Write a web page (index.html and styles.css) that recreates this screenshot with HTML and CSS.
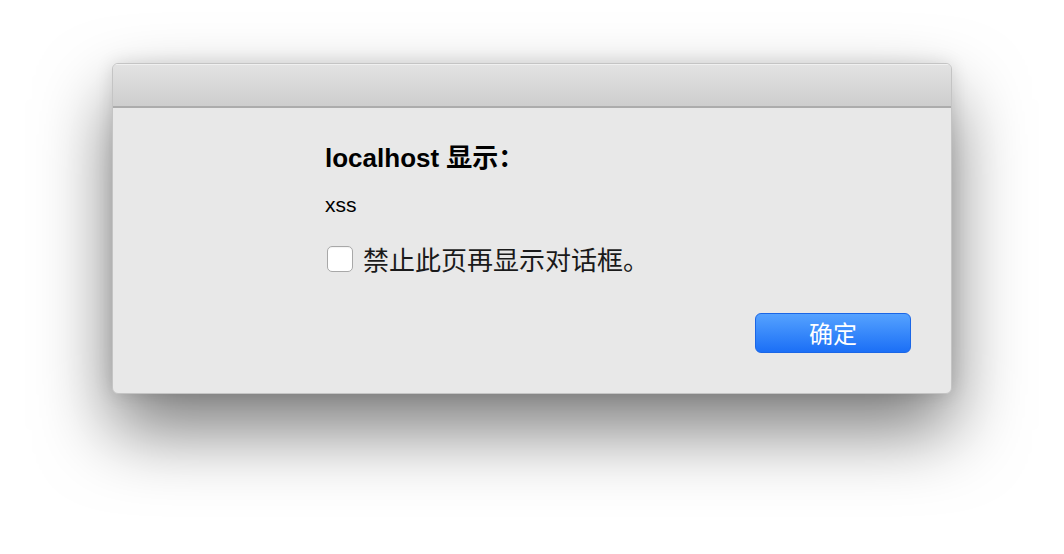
FILE: index.html
```html
<!DOCTYPE html>
<html lang="zh-CN">
<head>
    <meta charset="UTF-8">
    <meta name="viewport" content="width=device-width, initial-scale=1.0">
    <title>localhost 显示</title>
    <link rel="stylesheet" href="styles.css">
</head>
<body>
    <div class="dialog">
        <div class="titlebar"></div>

        <div class="content">
            <h1 class="title">localhost 显示：</h1>
            <p class="message">xss</p>

            <label class="suppress">
                <span class="checkbox"></span>
                <span>禁止此页再显示对话框。</span>
            </label>
        </div>

        <div class="footer">
            <button class="ok-btn">确定</button>
        </div>
    </div>
</body>
</html>
```

FILE: styles.css
```css
* {
    margin: 0;
    padding: 0;
    box-sizing: border-box;
}

body {
    font-family: 'Liberation Sans', 'Noto Sans CJK SC', sans-serif;
    background: #ffffff;
    width: 1064px;
    height: 554px;
    overflow: hidden;
    padding: 63px 0 0 112px;
}

.dialog {
    width: 840px;
    background: #e8e8e8;
    border-radius: 6px;
    border: 1px solid #c4c4c4;
    box-shadow: 0 36px 72px rgba(0, 0, 0, 0.52), 0 0 18px rgba(0, 0, 0, 0.12);
    overflow: hidden;
}

.titlebar {
    height: 44px;
    background: linear-gradient(#e2e2e2, #cecece);
    border-top: 1px solid #f0f0f0;
    border-bottom: 2px solid #acacac;
}

.content {
    padding: 35px 0 0 212px;
    color: #000;
}

.title {
    font-size: 26px;
    font-weight: bold;
    line-height: 30px;
}

.message {
    font-size: 21px;
    line-height: 24px;
    margin-top: 20px;
}

.suppress {
    display: flex;
    align-items: center;
    gap: 10px;
    margin-top: 29px;
    font-family: 'Noto Sans CJK SC', sans-serif;
    font-size: 26px;
    line-height: 26px;
    color: #1a1a1a;
}

.checkbox {
    width: 26px;
    height: 26px;
    margin-left: 2px;
    background: #ffffff;
    border: 1px solid #a8a8a8;
    border-radius: 5px;
    box-shadow: inset 0 1px 1px rgba(0, 0, 0, 0.05);
}

.footer {
    display: flex;
    justify-content: flex-end;
    padding: 41px 40px 40px 0;
}

.ok-btn {
    width: 156px;
    height: 40px;
    border: 1px solid #1a66e6;
    border-radius: 6px;
    background: linear-gradient(#55a2ff, #1b6ff6);
    color: #ffffff;
    font-family: 'Noto Sans CJK SC', sans-serif;
    font-size: 24px;
    line-height: 38px;
}
```
